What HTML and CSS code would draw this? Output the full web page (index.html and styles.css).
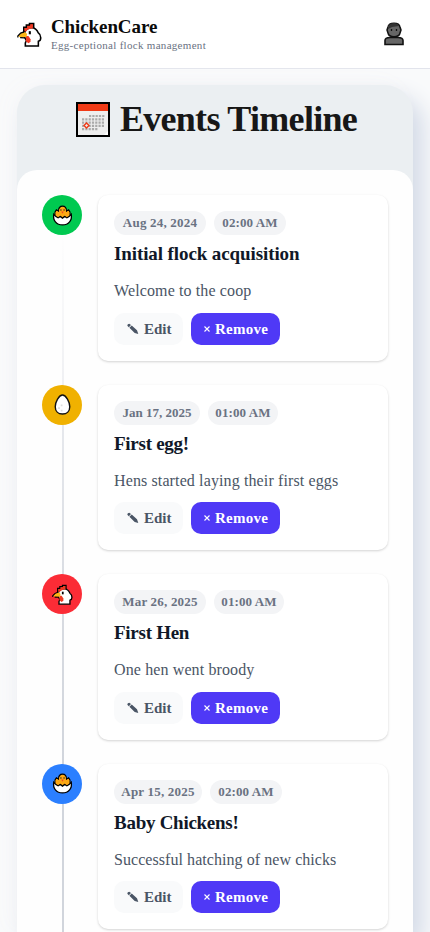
FILE: index.html
```html
<!DOCTYPE html>
<html lang="en">
<head>
<meta charset="utf-8">
<meta name="viewport" content="width=device-width, initial-scale=1">
<title>ChickenCare</title>
<link rel="stylesheet" href="styles.css">
</head>
<body>
<svg class="defs" aria-hidden="true">
  <symbol id="hen" viewBox="0 0 24 24">
    <path d="M6.500 10V5h2.500V3h3V1.500h4V8z" fill="#ef3a24" stroke="#000" stroke-width="1.500"/>
    <path d="M7.500 9.500C9 6.500 11 5.500 14 5.500c4 0 5.500 2.500 6.500 5 1.500 1 2.300 2.500 2.300 4.500s-.5 3-2.300 3.500V23H8v-3l1-2-1.500-3z" fill="#fff" stroke="#000" stroke-width="1.500"/>
    <path d="M7.300 9V5.700h2.500v-2h3V2.300h2.400v3.900c-3 0-5.500 1-6.500 3z" fill="#ef3a24"/>
    <path d="M8.500 13.500h2.500l2 3v2.500L11 20.500l-2.500-2z" fill="#ef3a24"/>
    <path d="M7.500 9.500L4 10.800 1.200 13.500l2 1.300 5.800-.3.800-3z" fill="#fcb514"/>
    <path d="M6.800 9.500L3.500 10.700.8 13.500v1.300M3 15l4.500.2" fill="none" stroke="#000" stroke-width="1.200"/>
    <path d="M12.300 8.800v3" stroke="#000" stroke-width="2"/>
  </symbol>
  <symbol id="chick" viewBox="0 0 24 24">
    <path d="M3.500 13V8L5 5.500 7.500 7C7.500-.5 16.500-.5 16.500 7L19 5.500 20.500 8v5z" fill="#fca815" stroke="#000" stroke-width="1.400"/>
    <path d="M2 10.500L4.500 13l2.500 1.500L9.500 13l2.500 2 2.500-2 2.500 1.500 2.500-1.500 2.500-2.500c1.300 7-3 12.300-10 12.300S.7 17.500 2 10.500z" fill="#fff" stroke="#000" stroke-width="1.500"/>
    <path d="M4.200 12V8.300L5.300 6.700 8 9.500 8.300 5.500c.6-4 6.800-4 7.400 0L16 9.500l2.700-2.800 1.100 1.600V12L17 14l-2.500-2L12 14l-2.500-2L7 14z" fill="#fca815"/>
    <path d="M10.200 4.700v2M13.800 4.700v2" stroke="#222" stroke-width="1"/>
    <path d="M10.500 7.500h3L12 10z" fill="#ef4a24"/>
  </symbol>
  <symbol id="egg" viewBox="0 0 24 24">
    <path d="M12 1.200C8 1.200 3.700 9 3.700 14.500c0 5 3.300 8.300 8.300 8.300s8.300-3.300 8.300-8.300C20.300 9 16 1.200 12 1.200z" fill="#fff" stroke="#111" stroke-width="1.600"/>
    <path d="M7 15h2v2H7zM10 12h2v2h-2zM10 18h2v2h-2z" fill="#ddd"/>
  </symbol>
  <symbol id="pencil" viewBox="0 0 12 12">
    <path d="M.3 2.700Q.3 1 2.300.8L4 2 1.800 4.200zM2.400 4.800L4.700 2.500 10 7.300l1.300 3.700L7.700 10z" fill="currentColor"/>
  </symbol>
  <symbol id="cross" viewBox="0 0 6 6"><path d="M.5.5l5 5M5.500.5l-5 5" stroke="currentColor" stroke-width="1.100"/></symbol>
</svg>
<header class="topbar">
  <svg class="logo"><use href="#hen"/></svg>
  <div class="brand">
    <div class="name">ChickenCare</div>
    <div class="tagline">Egg-ceptional flock management</div>
  </div>
  <svg class="user" viewBox="0 0 20 24">
    <path d="M1 22.500V18.500c0-2 2-3 5-3h8c3 0 5 1 5 3v4z" fill="#666" stroke="#111" stroke-width="1.600"/>
    <path d="M4 5c1-5 11-5 12 0l1 3-1 3c-1 5-11 5-12 0L3 8z" fill="#666" stroke="#111" stroke-width="1.500"/>
    <path d="M4 7V4c3-4 9-4 11 0L8 5z" fill="#333"/>
    <path d="M7.500 7v2M12.500 7v2" stroke="#111" stroke-width="1.300"/>
  </svg>
</header>
<main class="page">
  <section class="panel">
    <h1 class="title">
      <svg class="calendar" viewBox="0 0 34 35">
        <rect x="1" y="1" width="32" height="33" fill="#eee" stroke="#000" stroke-width="2"/>
        <path d="M2 2h30v7H2z" fill="#f13a16"/>
        <path d="M13 14h16M6 17.300h23M6 20.600h23M6 23.900h23M6 27.200h16" fill="none" stroke="#aaa" stroke-width="2.200" stroke-dasharray="2.200 1.100"/>
        <path d="M10.500 21l2.500 2.500-2.500 2.500L8 23.500z" fill="#eee" stroke="#f13a16" stroke-width="1.400"/>
        <path d="M28 33l4-4v4z" fill="#fff"/>
      </svg>
      <span>Events Timeline</span>
    </h1>
    <div class="sheet">
      <article class="event">
        <div class="rail line-a"><div class="dot green"><svg><use href="#chick"/></svg></div></div>
        <div class="card">
          <div class="chips"><span class="chip long">Aug 24, 2024</span><span class="chip time">02:00 AM</span></div>
          <h2 class="wide">Initial flock acquisition</h2>
          <p>Welcome to the coop</p>
          <div class="actions"><button class="edit"><svg><use href="#pencil"/></svg><span>Edit</span></button><button class="remove"><svg><use href="#cross"/></svg><span>Remove</span></button></div>
        </div>
      </article>
      <article class="event">
        <div class="rail line-b"><div class="dot yellow"><svg><use href="#egg"/></svg></div></div>
        <div class="card">
          <div class="chips"><span class="chip short">Jan 17, 2025</span><span class="chip time narrow">01:00 AM</span></div>
          <h2>First egg!</h2>
          <p>Hens started laying their first eggs</p>
          <div class="actions"><button class="edit"><svg><use href="#pencil"/></svg><span>Edit</span></button><button class="remove"><svg><use href="#cross"/></svg><span>Remove</span></button></div>
        </div>
      </article>
      <article class="event">
        <div class="rail line-c"><div class="dot red"><svg><use href="#hen"/></svg></div></div>
        <div class="card">
          <div class="chips"><span class="chip long">Mar 26, 2025</span><span class="chip time narrow">01:00 AM</span></div>
          <h2>First Hen</h2>
          <p>One hen went broody</p>
          <div class="actions"><button class="edit"><svg><use href="#pencil"/></svg><span>Edit</span></button><button class="remove"><svg><use href="#cross"/></svg><span>Remove</span></button></div>
        </div>
      </article>
      <article class="event">
        <div class="rail line-d"><div class="dot blue"><svg><use href="#chick"/></svg></div></div>
        <div class="card">
          <div class="chips"><span class="chip medium">Apr 15, 2025</span><span class="chip time">02:00 AM</span></div>
          <h2>Baby Chickens!</h2>
          <p class="snug">Successful hatching of new chicks</p>
          <div class="actions"><button class="edit"><svg><use href="#pencil"/></svg><span>Edit</span></button><button class="remove"><svg><use href="#cross"/></svg><span>Remove</span></button></div>
        </div>
      </article>
    </div>
  </section>
</main>
</body>
</html>
```
FILE: styles.css
```css
* { box-sizing: border-box; }
html, body { margin: 0; height: 932px; overflow: hidden; }
body { background: #f9fafb; font-family: "Liberation Serif", serif; display: flex; flex-direction: column; }
.defs { display: none; }
svg { display: block; flex: none; }
h1, h2, p { margin: 0; white-space: nowrap; }
.topbar { height: 69px; flex: none; background: #fff; border-bottom: 1px solid #e2e4ec; display: flex; align-items: center; padding: 0 26px 0 17px; }
.logo { width: 25px; height: 25px; }
.brand { margin: -1px 0 0 9px; flex: 1; white-space: nowrap; }
.name { font-size: 19px; font-weight: 700; line-height: 22px; color: #0a0a0a; letter-spacing: -0.1px; }
.tagline { font-size: 11px; line-height: 14px; color: #6a7282; letter-spacing: 0.3px; }
.user { width: 20px; height: 24px; }
.page { flex: 1; padding: 16px 17px 0; min-height: 0; }
.panel { height: 100%; display: flex; flex-direction: column; background: #ebeff2; border-radius: 28px 28px 0 0; box-shadow: 10px 12px 22px #d3dae7, -8px -4px 20px #f8f8f9; }
.title { height: 85px; flex: none; display: flex; align-items: flex-start; justify-content: center; gap: 10px; padding: 17px 0 0 3px; font-size: 36px; line-height: 34px; letter-spacing: -0.7px; color: #171717; }
.calendar { width: 34px; height: 35px; }
.sheet { background: #fefefe; border-radius: 20px 20px 0 0; flex: 1; min-height: 0; overflow: hidden; padding: 25px 25px 0; display: flex; flex-direction: column; }
.event { display: flex; gap: 16px; height: 189.5px; flex: none; }
.event:last-child { flex: 1; min-height: 0; }
.rail { width: 40px; flex: none; background: 20px 0 / 2px 100% no-repeat; }
.line-a { background-image: linear-gradient(#fefefe 20%, #eff0f3); }
.line-b { background-image: linear-gradient(#e9ebef, #dadde3); }
.line-c { background-image: linear-gradient(#d9dce2, #d1d5dc); }
.line-d { background-image: linear-gradient(#d1d5dc, #d1d5dc); }
.dot { width: 40px; height: 40px; border-radius: 50%; display: flex; align-items: center; justify-content: center; }
.dot svg { width: 21px; height: 21px; }
.green { background: #00c950; }
.yellow { background: #f0b100; }
.red { background: #fb2c36; }
.blue { background: #2b7fff; }
.card { width: 290px; height: 165.500px; flex: none; background: #fff; border-radius: 10px; box-shadow: 0 1px 3px rgba(0,0,0,.1), 0 1px 2px rgba(0,0,0,.08); padding: 16px; }
.chips { display: flex; gap: 8px; }
.chip { height: 24px; border-radius: 12px; background: #f3f4f6; color: #6a7282; font-size: 13px; line-height: 24px; font-weight: 700; white-space: nowrap; text-align: center; letter-spacing: 0.2px; }
.long { width: 92px; }
.medium { width: 88px; }
.short { width: 86px; letter-spacing: 0; }
.time { width: 72px; letter-spacing: 0.1px; }
.narrow { width: 70px; }
.card h2 { font-size: 19px; line-height: 28px; margin-top: 5px; letter-spacing: -0.27px; color: #101828; }
.card h2.wide { letter-spacing: -0.1px; }
.card p { font-size: 16px; line-height: 24px; margin-top: 11px; letter-spacing: 0.12px; color: #4a5565; }
.card p.snug { letter-spacing: 0.06px; }
.actions { display: flex; gap: 8px; margin-top: 9.500px; }
.actions button { height: 32px; border: 0; border-radius: 10px; font: 700 15px/32px "Liberation Serif", serif; display: flex; align-items: center; padding: 0; white-space: nowrap; }
.actions .edit { width: 69px; background: #f9fafb; color: #4a5565; }
.edit svg { width: 12px; height: 12px; margin: 0 5px 0 13px; }
.actions .remove { width: 89px; background: #4f39f6; color: #fff; letter-spacing: 0.25px; }
.remove svg { width: 6px; height: 6px; margin: 0 5px 0 13px; }
```
